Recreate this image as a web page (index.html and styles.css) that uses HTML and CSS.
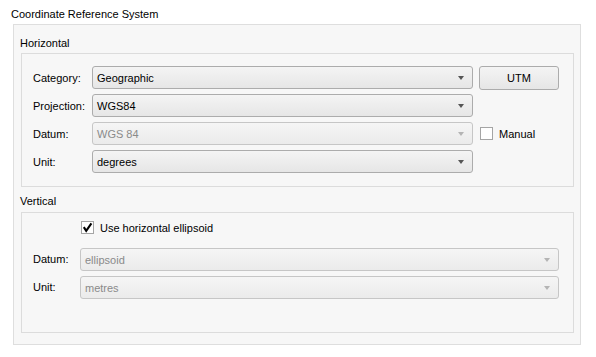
FILE: index.html
```html
<!DOCTYPE html>
<html>
<head>
<meta charset="utf-8">
<link rel="stylesheet" href="styles.css">
</head>
<body>
<div class="page">
  <div class="title">Coordinate Reference System</div>
  <div class="outer">
    <div class="section-label">Horizontal</div>
    <div class="group hgrid">
      <div class="label">Category:</div>
      <div class="combo"><span>Geographic</span><i class="arrow"></i></div>
      <div class="button">UTM</div>

      <div class="label">Projection:</div>
      <div class="combo"><span>WGS84</span><i class="arrow"></i></div>
      <div></div>

      <div class="label">Datum:</div>
      <div class="combo disabled"><span>WGS 84</span><i class="arrow"></i></div>
      <label class="check"><span class="box"></span><span>Manual</span></label>

      <div class="label">Unit:</div>
      <div class="combo"><span>degrees</span><i class="arrow"></i></div>
      <div></div>
    </div>

    <div class="section-label vlabel">Vertical</div>
    <div class="group vgrid">
      <div></div>
      <label class="check"><span class="box"><svg width="11" height="11" viewBox="0 0 11 11"><path d="M1.8 5.2 L4.2 8.8 L9.4 1.4" fill="none" stroke="#000" stroke-width="2.1"/></svg></span><span>Use horizontal ellipsoid</span></label>

      <div class="label">Datum:</div>
      <div class="combo disabled"><span>ellipsoid</span><i class="arrow"></i></div>

      <div class="label">Unit:</div>
      <div class="combo disabled"><span>metres</span><i class="arrow"></i></div>
    </div>
  </div>
</div>
</body>
</html>
```
FILE: styles.css
```css
html, body {
  margin: 0;
  padding: 0;
  background: #ffffff;
}
body {
  font-family: "Liberation Sans", Arial, sans-serif;
  font-size: 11px;
  color: #000;
}
.page {
  width: 596px;
  height: 357px;
  box-sizing: border-box;
  padding-left: 13px;
  padding-top: 6px;
}
.title {
  height: 18px;
  line-height: 16px;
  margin-left: -2px;
}
.outer {
  width: 568px;
  height: 321px;
  box-sizing: border-box;
  border: 1px solid #dedede;
  background: #f7f7f7;
  padding: 10px 6px 0 7px;
}
.section-label {
  height: 18px;
  line-height: 16px;
  margin-left: -1px;
}
.vlabel {
  margin-top: 6px;
  height: 19px;
}
.group {
  border: 1px solid #dcdcdc;
  box-sizing: border-box;
  width: 553px;
  background: #f7f7f7;
}
.hgrid {
  height: 134px;
  display: grid;
  grid-template-columns: 53px 381px 80px;
  column-gap: 6px;
  grid-auto-rows: 23px;
  row-gap: 5px;
  padding: 12px 0 0 11px;
  align-items: center;
}
.vgrid {
  height: 121px;
  display: grid;
  grid-template-columns: 47px 479px;
  grid-template-rows: 27px 28px 23px;
  padding: 8px 0 0 11px;
  align-items: start;
}
.vgrid .label {
  line-height: 23px;
}
.vgrid .check {
  grid-column: 2;
  height: 13px;
  margin-left: 1px;
}
.label {
  white-space: nowrap;
}
.combo {
  height: 23px;
  box-sizing: border-box;
  border: 1px solid #acacac;
  border-radius: 3px;
  background: linear-gradient(#f4f4f4, #e6e6e6);
  display: flex;
  align-items: center;
  padding-left: 4px;
  padding-right: 8px;
  justify-content: space-between;
}
.combo.disabled {
  border-color: #c6c6c6;
  background: linear-gradient(#f5f5f5, #ebebeb);
  color: #8a8a8a;
}
.arrow {
  width: 0;
  height: 0;
  border-left: 3.5px solid transparent;
  border-right: 3.5px solid transparent;
  border-top: 4px solid #555;
}
.combo.disabled .arrow {
  border-top-color: #b4b4b4;
}
.button {
  height: 24px;
  box-sizing: border-box;
  border: 1px solid #acacac;
  border-radius: 3px;
  background: linear-gradient(#f4f4f4, #e6e6e6);
  display: flex;
  align-items: center;
  justify-content: center;
}
.check {
  display: flex;
  align-items: center;
  gap: 6px;
  white-space: nowrap;
  margin-left: 1px;
}
.box {
  width: 13px;
  height: 13px;
  box-sizing: border-box;
  border: 1px solid #a5a5a5;
  background: #fff;
  display: flex;
  align-items: center;
  justify-content: center;
}
.box svg {
  display: block;
}
```
